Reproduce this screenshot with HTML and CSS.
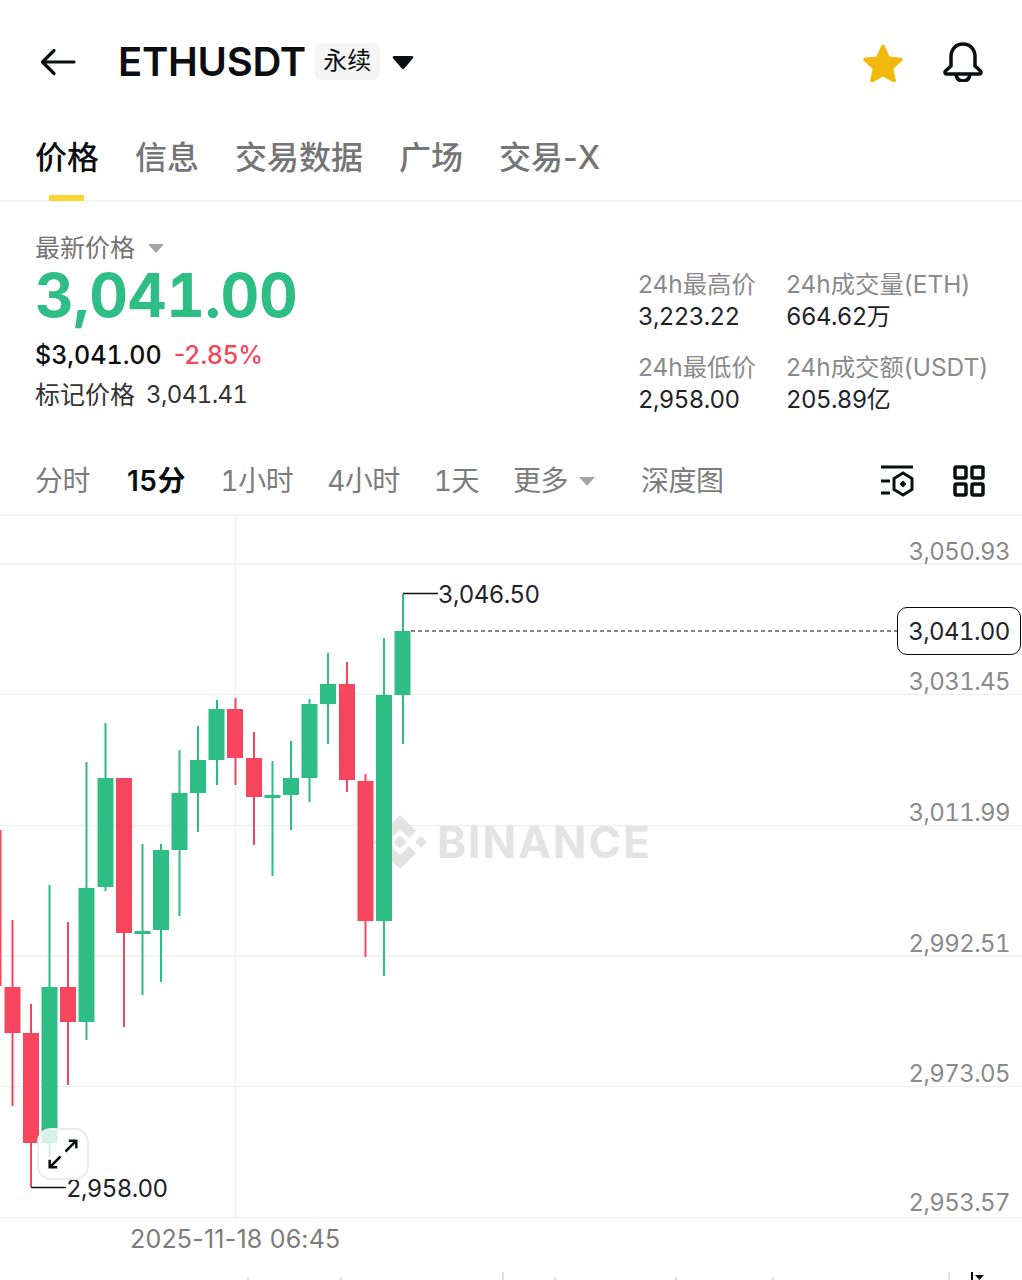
FILE: index.html
```html
<!DOCTYPE html>
<html lang="zh-CN">
<head>
    <meta charset="UTF-8">
    <meta name="viewport" content="width=device-width, initial-scale=1.0">
    <title>ETHUSDT</title>
    <link rel="stylesheet" href="styles.css">
</head>
<body>
    <header class="topbar">
        <svg class="back" viewBox="0 0 36 28"><path d="M34 14H3M14 2.500 2.500 14 14 25.500"/></svg>
        <h1 class="symbol">ETHUSDT</h1>
        <span class="badge">永续</span>
        <svg class="caret-down" viewBox="0 0 22 15"><path d="M2 1h18c1.200 0 1.700 1.300 1 2.200l-9 10.600c-.5.6-1.500.6-2 0L1 3.200C.3 2.300.8 1 2 1z"/></svg>
        <div class="topbar-icons">
            <svg class="star" viewBox="0 0 40 38"><path d="M20 .5c.7 0 1.300.4 1.600 1.100l4.900 10.900 11.700 1.300c1.500.2 2.100 2 1 3l-8.800 8 2.500 11.600c.3 1.500-1.300 2.600-2.600 1.900L20 32.400 9.700 38.300c-1.300.7-2.900-.4-2.600-1.900l2.500-11.600-8.800-8c-1.100-1-.5-2.800 1-3l11.700-1.300 4.900-10.900C18.700.9 19.300.5 20 .5z"/></svg>
            <svg class="bell" viewBox="0 0 40 40"><path d="M8 24V15C8 7 13 2 20 2s12 5 12 13v9l5.500 5c1 1 .5 3-1 3h-33c-1.500 0-2-2-1-3z"/><path d="M13 32c.5 5 3 7 7 7s6.500-2 7-7"/></svg>
        </div>
    </header>

    <nav class="tabs">
        <a class="tab active">价格</a>
        <a class="tab">信息</a>
        <a class="tab">交易数据</a>
        <a class="tab">广场</a>
        <a class="tab">交易-X</a>
    </nav>

    <section class="summary">
        <div class="price-block">
            <div class="price-label">最新价格 <span class="tri"></span></div>
            <div class="price">3,041.00</div>
            <div class="price-sub"><span class="fiat">$3,041.00</span><span class="change">-2.85%</span></div>
            <div class="mark"><span>标记价格</span><span class="mark-value">3,041.41</span></div>
        </div>
        <div class="stats">
            <div class="stat"><span class="stat-label">24h最高价</span><span class="stat-value">3,223.22</span></div>
            <div class="stat"><span class="stat-label">24h成交量(ETH)</span><span class="stat-value">664.62万</span></div>
            <div class="stat"><span class="stat-label">24h最低价</span><span class="stat-value">2,958.00</span></div>
            <div class="stat"><span class="stat-label">24h成交额(USDT)</span><span class="stat-value">205.89亿</span></div>
        </div>
    </section>

    <div class="intervals">
        <a class="interval">分时</a>
        <a class="interval active">15分</a>
        <a class="interval">1小时</a>
        <a class="interval">4小时</a>
        <a class="interval">1天</a>
        <a class="interval iv-more">更多 <span class="tri"></span></a>
        <a class="interval iv-depth">深度图</a>
        <div class="interval-icons">
            <svg class="icon-indicator" viewBox="0 0 36 32"><path d="M1 2h32M1 16h9M1 28h9"/><path d="M23 8l9 5.500v11L23 30l-9-5.500v-11z"/><path class="dot" d="M23 15.500l3.500 3.500-3.500 3.500-3.500-3.500z"/></svg>
            <svg class="icon-grid" viewBox="0 0 32 32"><rect x="2" y="2" width="11" height="11" rx="1.500"/><rect x="19" y="2" width="11" height="11" rx="1.500"/><rect x="2" y="19" width="11" height="11" rx="1.500"/><rect x="19" y="19" width="11" height="11" rx="1.500"/></svg>
        </div>
    </div>

    <div class="chart">
        <svg class="chart-svg" viewBox="0 516 1022 764" width="1022" height="764">
            <g class="grid">
                <path d="M0 564H1022M0 694.500H1022M0 825.500H1022M0 956H1022M0 1086.500H1022M0 1217.500H1022M235.500 516V1217"/>
            </g>

            <g class="watermark">
                <path d="M400 815l16 16-7 7-9-9-9 9-7-7zM415 842l6-6 6 6-6 6zM373 842l6-6 6 6-6 6zM400 835.500l6.500 6.500-6.500 6.500-6.500-6.500zM400 869l-16-16 7-7 9 9 9-9 7 7z"/>
                <text x="437" y="858">BINANCE</text>
            </g>

            <g class="up">
                <rect x="48.500" y="885" width="2" height="272"/><rect x="41.500" y="987" width="16" height="156"/>
                <rect x="85.500" y="762" width="2" height="278"/><rect x="78.500" y="888" width="16" height="134"/>
                <rect x="104.500" y="723" width="2" height="168"/><rect x="97.500" y="778" width="16" height="109"/>
                <rect x="141.500" y="844" width="2" height="151"/><rect x="134.500" y="931" width="16" height="3"/>
                <rect x="160" y="844" width="2" height="138"/><rect x="153" y="850" width="16" height="80"/>
                <rect x="178.500" y="750" width="2" height="166"/><rect x="171.500" y="793" width="16" height="57"/>
                <rect x="197" y="726" width="2" height="106"/><rect x="190" y="760" width="16" height="33"/>
                <rect x="216" y="700" width="2" height="85"/><rect x="208.500" y="709" width="16" height="51"/>
                <rect x="271.500" y="761" width="2" height="115"/><rect x="264.500" y="795" width="16" height="3"/>
                <rect x="290" y="741" width="2" height="89"/><rect x="283" y="778" width="16" height="17"/>
                <rect x="308.500" y="699" width="2" height="103"/><rect x="301.500" y="704" width="16" height="74"/>
                <rect x="327" y="653" width="2" height="91"/><rect x="320" y="684" width="16" height="20"/>
                <rect x="383" y="638" width="2" height="338"/><rect x="376" y="695" width="16" height="226"/>
                <rect x="402" y="594" width="2" height="150"/><rect x="394.500" y="631" width="16" height="64"/>
            </g>
            <g class="down">
                <rect x="-1" y="830" width="2.500" height="156"/>
                <rect x="11.500" y="920" width="2" height="186"/><rect x="4.500" y="987" width="16" height="46"/>
                <rect x="30" y="1004" width="2" height="183"/><rect x="23" y="1033" width="16" height="110"/>
                <rect x="67" y="922" width="2" height="163"/><rect x="60" y="987" width="16" height="35"/>
                <rect x="123" y="778" width="2" height="249"/><rect x="116" y="778" width="16" height="155"/>
                <rect x="234.500" y="698" width="2" height="87"/><rect x="227" y="709" width="16" height="49"/>
                <rect x="253" y="732" width="2" height="113"/><rect x="246" y="758" width="16" height="39"/>
                <rect x="346" y="662" width="2" height="130"/><rect x="339" y="684" width="16" height="96"/>
                <rect x="364.500" y="774" width="2" height="183"/><rect x="357.500" y="781" width="16" height="140"/>
            </g>

            <path class="leader" d="M403 593.500H438M31 1187.500H66"/>
            <path class="last-line" d="M411 631H897"/>
            <text class="extreme" x="438" y="603">3,046.50</text>
            <text class="extreme" x="66" y="1197">2,958.00</text>

            <g class="axis">
                <text x="1010" y="560">3,050.93</text>
                <text x="1010" y="690">3,031.45</text>
                <text x="1010" y="821">3,011.99</text>
                <text x="1010" y="952">2,992.51</text>
                <text x="1010" y="1082">2,973.05</text>
                <text x="1010" y="1211">2,953.57</text>
            </g>
            <text class="time" x="130" y="1248">2025-11-18 06:45</text>
            <path class="cut-ticks" d="M248 1277v3M341 1277v3M555 1277v3M676 1277v3M773 1277v3M503 1272v8M949 1272v8"/>
            <path class="cut-mark" d="M972 1272v8"/>
            <path class="cut-mark-fill" d="M975 1275h9l-4.500 5z"/>
        </svg>

        <div class="last-price">3,041.00</div>
        <button class="expand">
            <svg viewBox="0 0 36 36"><path d="M21 15 34 2M25 2h9v9M15 21 2 34M11 34H2v-9"/></svg>
        </button>
    </div>
</body>
</html>
```

FILE: styles.css
```css
* {
    box-sizing: border-box;
}
html, body {
    margin: 0;
    height: 1280px;
    overflow: hidden;
}
body {
    width: 1022px;
    background-color: white;
    color: #0b0e11;
    font-family: Inter, "Noto Sans CJK SC", sans-serif;
}
a {
    display: block;
}
svg {
    display: block;
}

/* every number in the app has even digit widths */
.price,
.fiat,
.mark-value,
.stat-value,
.interval,
.extreme,
.axis text,
.last-price {
    font-variant-numeric: tabular-nums;
}

/* top bar */
.topbar {
    height: 124px;
    padding: 43px 39px 0 40px;
    display: flex;
    align-items: flex-start;
}
.back {
    width: 36px;
    height: 28px;
    margin-top: 5px;
    fill: none;
    stroke: #0b0e11;
    stroke-width: 3.200;
    stroke-linecap: round;
    stroke-linejoin: round;
}
.symbol {
    margin: 0 0 0 42px;
    height: 38px;
    font-size: 40px;
    line-height: 38px;
    font-weight: 600;
    letter-spacing: -0.3px;
}
.badge {
    margin-left: 9px;
    width: 65px;
    height: 37px;
    background-color: #f5f5f5;
    border-radius: 6px;
    font-size: 24px;
    line-height: 36px;
    text-align: center;
}
.caret-down {
    width: 22px;
    height: 15px;
    margin: 12px 0 0 12px;
    fill: #0b0e11;
}
.topbar-icons {
    margin-left: auto;
    display: flex;
    gap: 40px;
}
.star {
    width: 40px;
    height: 38px;
    margin-top: 1px;
    fill: #f0b90b;
}
.bell {
    width: 40px;
    height: 40px;
    margin-top: -1px;
    fill: none;
    stroke: #0b0e11;
    stroke-width: 3.500;
    stroke-linejoin: round;
}

/* tabs */
.tabs {
    height: 78px;
    padding-left: 35px;
    display: flex;
    gap: 36px;
    border-bottom: 2px solid #f3f4f6;
}
.tab {
    position: relative;
    height: 66px;
    font-size: 32px;
    line-height: 68px;
    font-weight: 500;
    color: #757575;
}
.tab.active {
    color: #0b0e11;
}
.tab.active::after {
    content: "";
    position: absolute;
    left: 14px;
    top: 71px;
    width: 35px;
    height: 6px;
    background-color: #fcd535;
}

/* price summary */
.summary {
    height: 234px;
    padding: 30px 0 0 35px;
    display: flex;
}
.price-block {
    width: 603px;
}
.price-label {
    display: flex;
    align-items: center;
    gap: 13px;
    height: 32px;
    font-size: 25px;
    line-height: 32px;
    color: #757575;
}
.tri {
    display: inline-block;
    border-left: 8px solid transparent;
    border-right: 8px solid transparent;
    border-top: 9px solid #a5a5a5;
}
.price {
    height: 65px;
    font-size: 60px;
    line-height: 62px;
    font-weight: 700;
    letter-spacing: -0.3px;
    color: #2ebd85;
}
.price-sub {
    display: flex;
    gap: 12px;
    margin-top: 10px;
    height: 32px;
    font-size: 25px;
    line-height: 32px;
}
.fiat {
    font-weight: 500;
}
.change {
    font-weight: 500;
    color: #f6465d;
}
.mark {
    display: flex;
    gap: 11px;
    margin-top: 8px;
    font-size: 25px;
    line-height: 32px;
    color: #333;
}
.mark-value {
    font-size: 24px;
    letter-spacing: -0.6px;
}
.stats {
    display: grid;
    grid-template-columns: 148px auto;
    grid-auto-rows: 83px;
    padding-top: 36px;
}
.stat {
    display: flex;
    flex-direction: column;
    font-size: 24.400px;
    line-height: 32.500px;
    white-space: nowrap;
}
.stat-label {
    color: #8a8a8a;
}
.stat-value {
    font-size: 24px;
    letter-spacing: -0.6px;
    color: #1e2329;
}

/* interval row */
.intervals {
    height: 80px;
    padding: 12px 37px 0 35px;
    display: flex;
    gap: 34px;
    align-items: center;
    border-bottom: 2px solid #f3f4f6;
    font-size: 28px;
    color: #7c7c7c;
}
.interval {
    line-height: 34px;
    letter-spacing: -0.5px;
    white-space: nowrap;
}
.interval.active {
    margin: 0 0.500px 0 3px;
    color: #0b0e11;
    font-weight: 600;
    font-variant-numeric: normal;
    letter-spacing: 0.5px;
}
.iv-more {
    display: flex;
    align-items: center;
    gap: 11px;
}
.iv-depth {
    margin-left: 12px;
}
.interval-icons {
    margin-left: auto;
    display: flex;
    gap: 37px;
    align-items: center;
}
.icon-indicator {
    width: 36px;
    height: 32px;
    fill: none;
    stroke: #0b0e11;
    stroke-width: 3;
}
.icon-indicator .dot {
    fill: #0b0e11;
    stroke: none;
}
.icon-grid {
    width: 32px;
    height: 32px;
    fill: none;
    stroke: #0b0e11;
    stroke-width: 3.500;
}

/* chart */
.chart {
    position: relative;
    height: 764px;
}
.grid path {
    fill: none;
    stroke: #eff0f2;
    stroke-width: 1.500;
}
.watermark {
    fill: #e3e3e3;
}
.watermark text {
    font-size: 44px;
    font-weight: 700;
    letter-spacing: 2px;
}
.up {
    fill: #2ebd85;
}
.down {
    fill: #f6465d;
}
.leader {
    fill: none;
    stroke: #0b0e11;
    stroke-width: 1.500;
}
.last-line {
    fill: none;
    stroke: #0b0e11;
    stroke-width: 1;
    stroke-dasharray: 4 3;
}
.extreme {
    font-size: 24px;
    letter-spacing: -0.6px;
    fill: #1e2329;
}
.axis text {
    font-size: 24px;
    letter-spacing: -0.6px;
    fill: #8a8a8a;
    text-anchor: end;
}
.time {
    font-size: 25px;
    letter-spacing: 0.2px;
    fill: #7c7c7c;
}
.cut-ticks {
    fill: none;
    stroke: #d5d5d5;
    stroke-width: 1.500;
}
.cut-mark {
    fill: none;
    stroke: #0b0e11;
    stroke-width: 2;
}
.cut-mark-fill {
    fill: #0b0e11;
}
.last-price {
    position: absolute;
    left: 897px;
    top: 91px;
    width: 124px;
    height: 48px;
    border: 1px solid #0b0e11;
    border-radius: 10px;
    background-color: white;
    font-size: 24px;
    letter-spacing: -0.6px;
    line-height: 47px;
    text-align: center;
    color: #1e2329;
}
.expand {
    position: absolute;
    left: 37px;
    top: 612px;
    width: 52px;
    height: 52px;
    padding: 9px;
    border: 2px solid #ececec;
    border-radius: 14px;
    background-color: rgba(255,255,255,0.8);
}
.expand svg {
    width: 30px;
    height: 30px;
    fill: none;
    stroke: #0b0e11;
    stroke-width: 3;
}
```
